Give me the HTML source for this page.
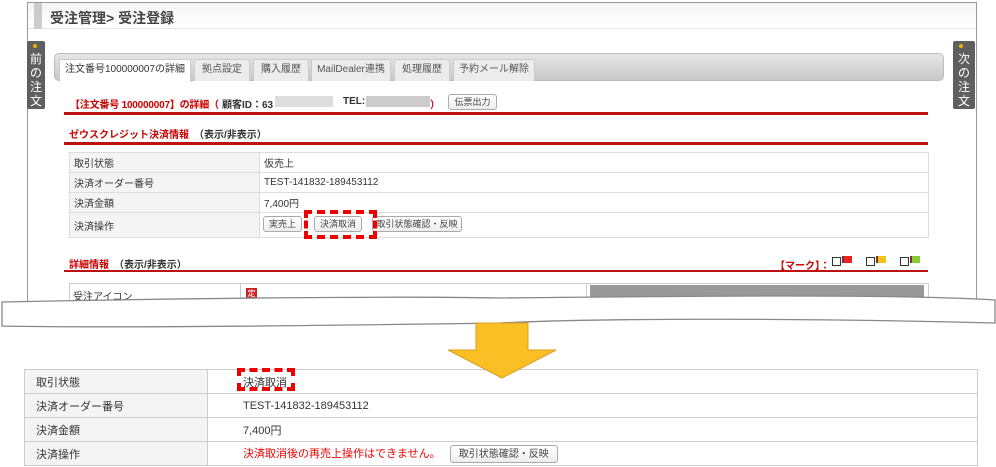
<!DOCTYPE html><html><head><meta charset="utf-8"><style>
*{margin:0;padding:0;box-sizing:border-box}
body{width:996px;height:467px;background:#fff;position:relative;overflow:hidden;font-family:"Liberation Sans","Noto Sans CJK JP",sans-serif;font-size:11px;color:#333}
.a{position:absolute;white-space:nowrap}
.frame{left:27px;top:2px;width:950px;height:310px;border:1px solid #999;border-bottom:none}
.hdr{left:28px;top:3px;width:948px;height:26px;background:linear-gradient(#f4f4f4,#fff);border-bottom:1px solid #e5e5e5}
.hdr .bar{position:absolute;left:6px;top:0;width:8px;height:26px;background:#ccc}
.hdr span{position:absolute;left:22px;top:5px;font-size:14px;font-weight:bold;color:#444}
.side{width:18px;height:68px;background:#5f5f5f;color:#fff;font-size:12px;line-height:14px;text-align:center;padding-top:11px;border-radius:2px;white-space:normal}
.side:before{content:"";position:absolute;top:3px;left:6px;width:4px;height:4px;background:#f0b000;border-radius:2px}
.tabs{left:54px;top:53px;width:890px;height:28px;border:1px solid #bbb;border-radius:5px;background:linear-gradient(#e6e6e6,#c8c8c8)}
.tab{position:absolute;top:5px;height:22px;background:#ececec;border:1px solid #ccc;border-bottom:none;font-size:10px;color:#555;text-align:center;line-height:20px;white-space:nowrap}
.tab.on{background:#fff;color:#333;height:23px}
.red{color:#c00;font-weight:bold}
.rl{height:3px;background:#b11;left:64px;width:864px}
table{border-collapse:collapse}
td{border:1px solid #ddd;padding:0 4px;height:20px;font-size:10px;white-space:nowrap}
td.l{background:#f4f4f4}
.btn{display:inline-block;border:1px solid #aaa;border-radius:3px;background:linear-gradient(#fff,#eee);padding:0;text-align:center;height:16px;line-height:15px;font-size:9px;color:#444;white-space:nowrap}
.bt td{height:24px;font-size:11px;border-color:#ccc;padding-left:11px}
.bt td.v{padding-left:35px}
</style></head><body>
<div class="a frame"></div>
<div class="a hdr"><div class="bar"></div><span>受注管理&gt; 受注登録</span></div>
<div class="a side" style="left:27px;top:41px">前<br>の<br>注<br>文</div>
<div class="a side" style="left:953px;top:41px;width:22px">次<br>の<br>注<br>文</div>
<div class="a tabs">
<div class="tab on" style="left:4px;width:132px">注文番号100000007の詳細</div>
<div class="tab" style="left:139px;width:56px">拠点設定</div>
<div class="tab" style="left:198px;width:56px">購入履歴</div>
<div class="tab" style="left:256px;width:80px">MailDealer連携</div>
<div class="tab" style="left:339px;width:56px">処理履歴</div>
<div class="tab" style="left:398px;width:82px">予約メール解除</div>
</div>
<div class="a red" style="left:70px;top:96px;font-size:10px;letter-spacing:-0.2px">【注文番号 100000007】の詳細（</div>
<div class="a" style="left:222px;top:96px;font-size:10px;font-weight:bold">顧客ID：63</div>
<div class="a" style="left:275px;top:96px;width:58px;height:11px;background:#ddd"></div>
<div class="a" style="left:343px;top:96px;font-size:10px;font-weight:bold">TEL:</div>
<div class="a" style="left:366px;top:96px;width:64px;height:11px;background:#ccc"></div>
<div class="a red" style="left:430px;top:96px;font-size:10px">）</div>
<div class="a btn" style="left:448px;top:94px;width:49px;height:16px">伝票出力</div>
<div class="a rl" style="top:112px"></div>
<div class="a" style="left:69px;top:126px;font-size:10px"><span class="red">ゼウスクレジット決済情報</span>　<b>（表示/非表示）</b></div>
<div class="a rl" style="top:142px"></div>
<table class="a" style="left:69px;top:152px;width:860px">
<tr><td class="l" style="width:190px">取引状態</td><td>仮売上</td></tr>
<tr><td class="l">決済オーダー番号</td><td>TEST-141832-189453112</td></tr>
<tr><td class="l">決済金額</td><td>7,400円</td></tr>
<tr><td class="l" style="height:25px">決済操作</td><td></td></tr>
</table>
<div class="a btn" style="left:263px;top:216px;width:39px">実売上</div>
<div class="a btn" style="left:314px;top:216px;width:48px">決済取消</div>
<div class="a btn" style="left:372px;top:216px;width:90px">取引状態確認・反映</div>
<div class="a" style="left:304px;top:210px;width:73px;height:29px;border:4px dashed #e00"></div>
<div class="a" style="left:69px;top:256px;font-size:10px"><span class="red">詳細情報</span>　<b>（表示/非表示）</b></div>
<div class="a" style="left:775px;top:257px;font-size:10px;color:#c00;font-weight:bold">【マーク】：</div>
<div class="a" style="left:832px;top:257px;width:9px;height:9px;border:1px solid #333"></div><div class="a" style="left:842px;top:256px;width:10px;height:7px;background:#e22;border-left:2px solid #733"></div>
<div class="a" style="left:866px;top:257px;width:9px;height:9px;border:1px solid #333"></div><div class="a" style="left:876px;top:256px;width:10px;height:7px;background:#f4c020;border-left:2px solid #733"></div>
<div class="a" style="left:900px;top:257px;width:9px;height:9px;border:1px solid #333"></div><div class="a" style="left:910px;top:256px;width:10px;height:7px;background:#8c3;border-left:2px solid #733"></div>
<div class="a" style="left:64px;top:270px;width:864px;height:2px;background:#b11"></div>
<div class="a" style="left:69px;top:283px;width:860px;height:20px;border:1px solid #ccc"></div>
<div class="a" style="left:73px;top:288px;font-size:10px">受注アイコン</div>
<div class="a" style="left:240px;top:284px;width:1px;height:18px;background:#ccc"></div>
<div class="a" style="left:246px;top:288px;width:11px;height:11px;background:#c22;color:#fff;font-size:8px;text-align:center;line-height:11px">定</div>
<div class="a" style="left:586px;top:284px;width:1px;height:18px;background:#ccc"></div>
<div class="a" style="left:590px;top:285px;width:334px;height:14px;background:#999"></div>
<svg class="a" style="left:0;top:290px" width="996" height="40"><path d="M2,12 C200,8 400,6 500,8 C700,6 900,4 995,10 L995,33 C800,28 600,28 500,33 C300,36 100,38 2,36 Z" fill="#fff" stroke="#888" stroke-width="1.3"/></svg>
<table class="a bt" style="left:24px;top:369px;width:954px;border:1px solid #888">
<tr><td class="l" style="width:183px">取引状態</td><td class="v">決済取消</td></tr>
<tr><td class="l">決済オーダー番号</td><td class="v">TEST-141832-189453112</td></tr>
<tr><td class="l">決済金額</td><td class="v">7,400円</td></tr>
<tr><td class="l">決済操作</td><td class="v"><span style="color:#e00">決済取消後の再売上操作はできません。</span> <span class="btn" style="font-size:10px;height:18px;line-height:17px;padding:0 8px;margin-left:6px">取引状態確認・反映</span></td></tr>
</table>
<div class="a" style="left:237px;top:368px;width:58px;height:23px;border:4px dashed #e00"></div>
<svg class="a" style="left:440px;top:320px" width="130" height="62"><path d="M36,3 L88,3 L88,30 L116,30 L62,58 L8,30 L36,30 Z" fill="#fbbf26" stroke="#d9a020" stroke-width="1"/></svg>
</body></html>
